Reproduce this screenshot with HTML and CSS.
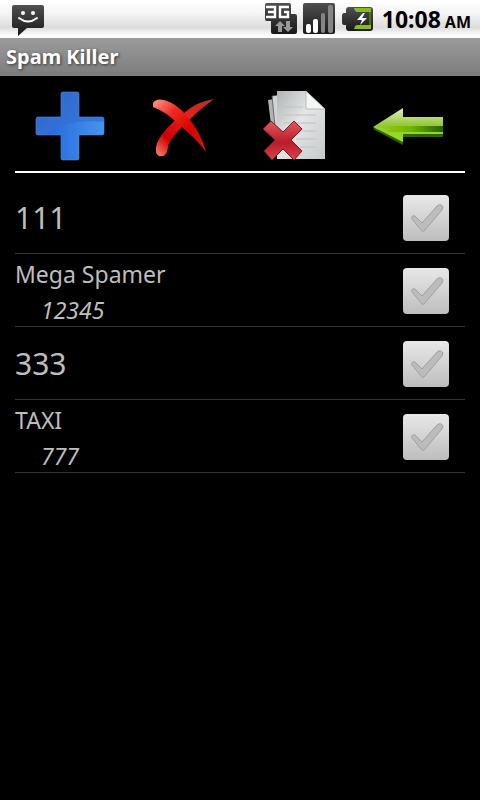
FILE: index.html
```html
<!DOCTYPE html>
<html lang="en">
<head>
    <meta charset="utf-8">
    <meta name="viewport" content="width=device-width, initial-scale=1">
    <title>Spam Killer</title>
    <link rel="stylesheet" href="styles.css">
</head>
<body>
    <div class="status-bar">
        <svg class="sms" width="34" height="32" viewBox="0 0 34 32">
            <defs>
                <linearGradient id="dark" x1="0" y1="0" x2="0" y2="1">
                    <stop offset="0" stop-color="#505050"/>
                    <stop offset="1" stop-color="#181818"/>
                </linearGradient>
            </defs>
            <path d="M3 0h28q2 0 2 2v19q0 2-2 2H16L7 31V23H3q-2 0-2-2V2q0-2 2-2z" fill="url(#dark)"/>
            <circle cx="12" cy="8" r="2" fill="#fff"/>
            <circle cx="22" cy="8" r="2" fill="#fff"/>
            <path d="M8 13q9 7 18 0" fill="none" stroke="#fff" stroke-width="2" stroke-linecap="round"/>
        </svg>
        <div class="status-icons">
            <svg width="34" height="32" viewBox="0 0 34 32">
                <path d="M3 0h22q2 0 2 2v9h4q2 0 2 2v16q0 2-2 2H9q-2 0-2-2V18H3q-2 0-2-2V2q0-2 2-2z" fill="url(#dark)"/>
                <path d="M2 4h9v10H2M4 9h7M25 4h-9v10h8V9h-4" fill="none" stroke="#fff" stroke-width="2.400"/>
                <path d="M11 23l5-5 5 5h-3v6h-4v-6zM19 24h3v-6h4v6h3l-5 5z" fill="#999"/>
            </svg>
            <svg width="32" height="32" viewBox="0 0 32 32">
                <rect width="32" height="31" rx="2" fill="url(#dark)"/>
                <rect x="3" y="21" width="5" height="9" rx="2" fill="#fff"/>
                <rect x="10" y="16" width="5" height="14" rx="2" fill="#fff"/>
                <rect x="18" y="10" width="4" height="20" rx="2" fill="#858585"/>
                <rect x="25" y="2" width="5" height="28" rx="2" fill="#858585"/>
            </svg>
            <svg width="34" height="32" viewBox="0 0 34 32">
                <path d="M9 4h21q3 0 3 3v18q0 3-3 3H9q-3 0-3-3v-3H4q-2 0-2-3v-6q0-3 2-3h2V7q0-3 3-3z" fill="url(#dark)"/>
                <path d="M14 5h17v4H17q-2 0-3-4zM14 26h17v-4H17q-2 0-3 4z" fill="#8aba1c"/>
                <path d="M29 9h2v13h-2z" fill="#4c7410"/>
                <path d="M23 10l-6 7 5 0-2 5 7-7-5 0 3-5z" fill="#fff"/>
            </svg>
        </div>
        <div class="clock">10:08 <span class="ampm">AM</span></div>
    </div>
    <h1 class="title-bar">Spam Killer</h1>

    <div class="content">
        <div class="toolbar">
            <button type="button" aria-label="Add">
                <svg width="72" height="72" viewBox="0 0 72 72">
                    <defs>
                        <linearGradient id="blue" x1="0" y1="0" x2="1" y2="1">
                            <stop offset="0" stop-color="#3566c8"/>
                            <stop offset="1" stop-color="#2f7fe8"/>
                        </linearGradient>
                        <linearGradient id="blueLight" x1="0" y1="0" x2="1" y2="0">
                            <stop offset="0" stop-color="#2367dc"/>
                            <stop offset="1" stop-color="#4a96ec"/>
                        </linearGradient>
                        <clipPath id="plus">
                            <path d="M28 2h14q2 0 2 2v23h23q2 0 2 2v14q0 2-2 2H44v23q0 2-2 2H28q-2 0-2-2V45H3q-2 0-2-2V29q0-2 2-2h23V4q0-2 2-2z"/>
                        </clipPath>
                    </defs>
                    <g clip-path="url(#plus)">
                        <rect width="72" height="72" fill="url(#blue)"/>
                        <path d="M10 45Q32 28 72 32V72H10z" fill="url(#blueLight)"/>
                    </g>
                    <path d="M28 2h14q2 0 2 2v23h23q2 0 2 2v14q0 2-2 2H44v23q0 2-2 2H28q-2 0-2-2V45H3q-2 0-2-2V29q0-2 2-2h23V4q0-2 2-2z" fill="none" stroke="#5288e0" stroke-width=".6"/>
                </svg>
            </button>
            <button type="button" aria-label="Delete">
                <svg width="72" height="72" viewBox="0 0 72 72">
                    <defs>
                        <linearGradient id="redDown" x1="0" y1="0" x2="1" y2="1">
                            <stop offset="0" stop-color="#ff9c90"/>
                            <stop offset=".3" stop-color="#f02c20"/>
                            <stop offset=".6" stop-color="#d80400"/>
                            <stop offset="1" stop-color="#c81810"/>
                        </linearGradient>
                        <linearGradient id="redUp" x1="1" y1="0" x2="0" y2="1">
                            <stop offset="0" stop-color="#b03028"/>
                            <stop offset=".4" stop-color="#e82018"/>
                            <stop offset=".75" stop-color="#d00000"/>
                            <stop offset="1" stop-color="#ff8878"/>
                        </linearGradient>
                    </defs>
                    <path d="M66 9Q50 11 36 23Q16 38 9 53Q6 64 11 66Q19 68 20 57Q21 49 39 32Q52 19 66 9z" fill="url(#redUp)"/>
                    <path d="M5 13Q8 8 16 10Q28 13 38 25Q53 42 58 62Q47 47 31 35Q19 22 5 17z" fill="url(#redDown)"/>
                </svg>
            </button>
            <button type="button" aria-label="Delete list">
                <svg width="72" height="72" viewBox="0 0 72 72">
                    <defs>
                        <linearGradient id="paper" x1="0" y1="0" x2="1" y2="1">
                            <stop offset="0" stop-color="#aeb4b4"/>
                            <stop offset=".45" stop-color="#e4e6e6"/>
                            <stop offset="1" stop-color="#c4caca"/>
                        </linearGradient>
                        <linearGradient id="cross" x1="0" y1="0" x2="0" y2="1">
                            <stop offset="0" stop-color="#e25860"/>
                            <stop offset=".55" stop-color="#b81c28"/>
                            <stop offset="1" stop-color="#d84450"/>
                        </linearGradient>
                    </defs>
                    <path d="M8 10l6-1 2 34h-4z" fill="#aeb4b4"/>
                    <path d="M12 6l6-1v42h-2z" fill="#d0d4d4" stroke="#444" stroke-width=".7"/>
                    <path d="M17 1h29l19 18v50H17z" fill="url(#paper)"/>
                    <path d="M23 17h20M23 25h33M23 33h33M23 41h33M36 49h20M40 57h16" stroke="#c9bfc2" stroke-width="1"/>
                    <path d="M46 1l19 18H46z" fill="#f4f5f5" stroke="#a2a8a8" stroke-width=".7"/>
                    <path d="M11 31l12 11 11-11 8 8-11 11 11 11-8 9-11-11-11 11-8-9 11-11L3 39z" fill="url(#cross)" stroke="#811820" stroke-linejoin="round"/>
                </svg>
            </button>
            <button type="button" aria-label="Back">
                <svg width="72" height="72" viewBox="0 0 72 72">
                    <defs>
                        <linearGradient id="green" x1="0" y1="0" x2="0" y2="1">
                            <stop offset="0" stop-color="#e0f0c0"/>
                            <stop offset=".5" stop-color="#94c838"/>
                            <stop offset="1" stop-color="#9ae020"/>
                        </linearGradient>
                        <linearGradient id="shade" x1="0" y1="0" x2="1" y2="0">
                            <stop offset="0" stop-color="#92d014"/>
                            <stop offset=".5" stop-color="#6cb400"/>
                            <stop offset="1" stop-color="#246000"/>
                        </linearGradient>
                    </defs>
                    <path d="M0 39L30 21v8h40v18H30v8z" fill="#2c6404"/>
                    <path d="M0 37L30 18v9h40v17H30v8z" fill="url(#green)"/>
                    <path d="M8 36h62v6H15z" fill="url(#shade)"/>
                </svg>
            </button>
        </div>

        <ul class="list">
            <li>
                <label for="n1"><span class="number">111</span></label>
                <input type="checkbox" id="n1">
            </li>
            <li>
                <label for="n2"><span class="name">Mega Spamer</span><span class="sub">12345</span></label>
                <input type="checkbox" id="n2">
            </li>
            <li>
                <label for="n3"><span class="number">333</span></label>
                <input type="checkbox" id="n3">
            </li>
            <li>
                <label for="n4"><span class="name">TAXI</span><span class="sub">777</span></label>
                <input type="checkbox" id="n4">
            </li>
        </ul>
    </div>

    <script>
        // Put the same tick drawing over every checkbox
        document.querySelectorAll('.list input').forEach(function(box) {
            const wrap = document.createElement('span');
            wrap.className = 'check';
            box.replaceWith(wrap);
            wrap.appendChild(box);
            wrap.insertAdjacentHTML('beforeend',
                '<svg width="46" height="46" viewBox="0 0 46 46">' +
                '<path class="mark" d="M9 24Q8 20 12 21L19 28L34 11Q38 8 40 12L39 15L21 36Q19 37 18 35Z" stroke-linejoin="round"/>' +
                '</svg>');
        });
    </script>
</body>
</html>
```
FILE: styles.css
```css
* { box-sizing: border-box; }
body { font-family: "Noto Sans", "Open Sans", sans-serif; background: #000; color: #bebebe; margin: 0; }
svg { display: block; }

.status-bar { display: flex; align-items: center; height: 38px; padding: 0 9px 0 11px; background: linear-gradient(#fff, #f4f4f4 35%, #dcdcdc 72%, #f8f8f8 90%, #fff); color: #000; }
.sms { margin-top: 4px; }
.status-icons { display: flex; gap: 5px; margin-left: auto; }
.clock { margin-left: 8px; padding-top: 2px; font-size: 23px; font-weight: bold; line-height: 36px; white-space: nowrap; }
.ampm { margin-left: -2px; font-size: 16px; }

.title-bar { margin: 0; padding: 0 6px; height: 38px; line-height: 38px; font-size: 20px; font-weight: bold; color: #fff; background: linear-gradient(#9b9b9b, #7c7c7c); text-shadow: 1px 1px 3px #333; }

.content { padding: 0 15px; }
.toolbar { display: grid; grid-template-columns: repeat(4, 1fr); padding: 14px 0 9px; border-bottom: 2px solid #fff; }
.toolbar button { display: flex; justify-content: center; padding: 0; background: none; border: none; cursor: pointer; }

.list { list-style: none; margin: 8px 0 0; padding: 0; }
.list li { display: flex; align-items: center; height: 73px; padding: 2px 16px 0 0; border-bottom: 1px solid #333; }
.list label { flex: 1; }
.number { font-size: 30px; line-height: 40px; }
.name, .sub { display: block; font-size: 23px; line-height: 36px; }
.name { padding-top: 2px; line-height: 36px; }
.sub { padding-left: 26px; font-style: italic; }

.check { position: relative; width: 46px; height: 46px; }
.check input { appearance: none; display: block; width: 46px; height: 46px; margin: 0; border-radius: 4px; background: linear-gradient(#e8e8e8, #bdbdbd); cursor: pointer; }
.check svg { position: absolute; top: 0; left: 0; pointer-events: none; }
.mark { fill: #bcbcbc; stroke: #a0a0a0; }
.check input:checked + svg .mark { fill: #6cc000; }
```
